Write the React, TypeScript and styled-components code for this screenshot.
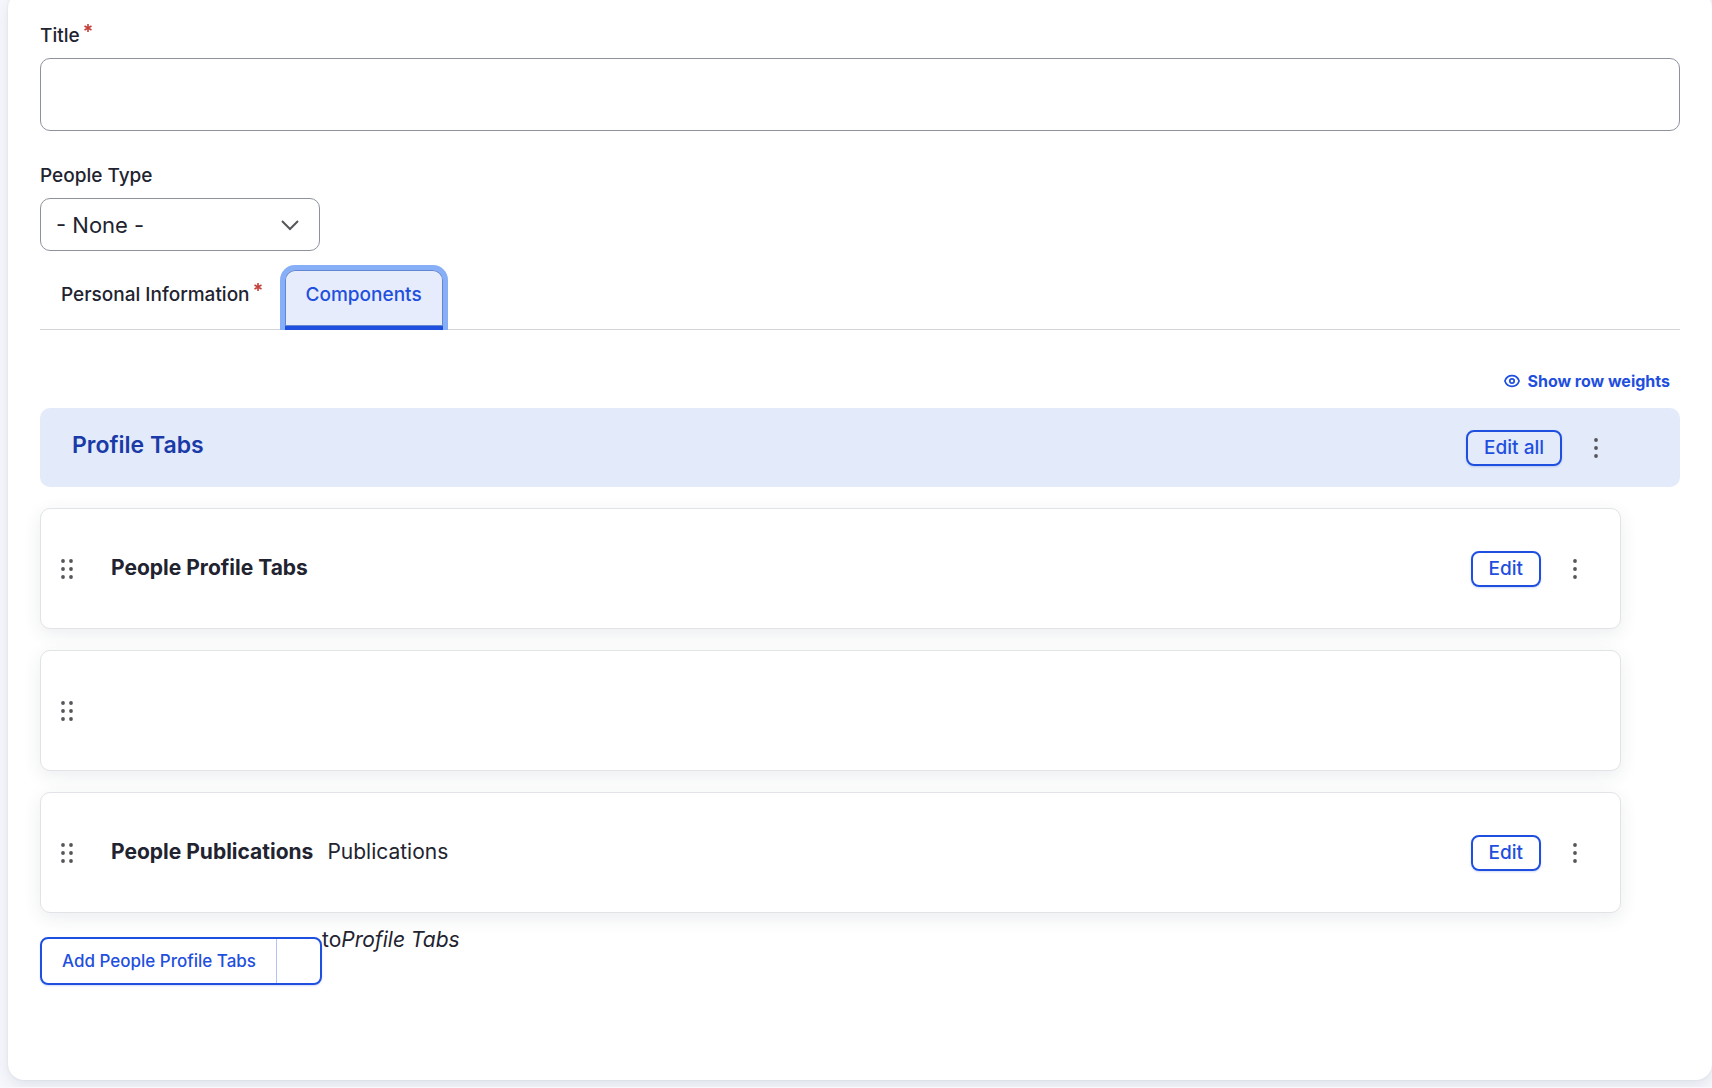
import React from "react";
import styled, { createGlobalStyle, css } from "styled-components";

const c = {
  page: "#f7f8fd",
  ink: "#222330",
  muted: "#55565b",
  line: "#d3d4d9",
  field: "#8e929c",
  blue: "#1f4fde",
  blueDark: "#1a3aa8",
  tint: "#e3eaf9",
  red: "#c5403a",
};

const GlobalStyle = createGlobalStyle`
  *, *::before, *::after { box-sizing: border-box; }
  body {
    margin: 0;
    background: ${c.page};
    color: ${c.ink};
    font-family: Inter, "Liberation Sans", sans-serif;
    font-size: 21px;
    line-height: 34px;
    -webkit-font-smoothing: antialiased;
  }
  button, input, select { font: inherit; color: inherit; }
`;

const Panel = styled.main`
  margin: -8px 0 7px 8px;
  padding: 32px 32px 95px;
  background: #fff;
  border-radius: 16px;
  box-shadow: 0 0 3px rgba(34, 35, 48, 0.08), 0 6px 16px rgba(34, 50, 80, 0.1);
`;

const Field = styled.div<{ $last?: boolean }>`
  display: flex;
  flex-direction: column;
  align-items: flex-start;
  gap: 10px;
  margin-bottom: ${(p) => (p.$last ? 19 : 33)}px;
`;

const Label = styled.label`
  display: flex;
  gap: 4px;
  font-size: 19px;
  line-height: 24px;
  font-weight: 500;
`;

const TextInput = styled.input`
  width: 100%;
  height: 73px;
  padding: 0 16px;
  border: 1px solid ${c.field};
  border-radius: 10px;
  background: #fff;
`;

const SelectWrap = styled.div`
  display: grid;
  width: 280px;
  align-items: center;
  > * { grid-area: 1 / 1; }
  > svg { justify-self: end; margin-right: 21px; pointer-events: none; }
`;

const Select = styled.select`
  appearance: none;
  width: 100%;
  height: 53px;
  padding: 0 48px 0 15px;
  border: 1px solid ${c.field};
  border-radius: 10px;
  background: #fff;
  font-size: 22px;
`;

const TabList = styled.nav`
  display: flex;
  gap: 2px;
  height: 60px;
  border-bottom: 1px solid ${c.line};
`;

const Tab = styled.a<{ $active?: boolean }>`
  display: flex;
  gap: 4px;
  height: 60px;
  padding: 13px 21px 12px;
  border-radius: 10px 10px 0 0;
  color: ${c.ink};
  font-size: 19px;
  line-height: 24px;
  font-weight: 500;
  text-decoration: none;
  ${(p) =>
    p.$active &&
    css`
      color: ${c.blue};
      background: #e6ecfb;
      border-bottom: 4px solid ${c.blue};
      box-shadow: inset 0 0 0 1px #6387d0, 0 0 0 5px #87aff8;
      clip-path: inset(-8px -8px 0 -8px);
    `}
`;

const WeightsRow = styled.div`
  display: flex;
  justify-content: flex-end;
  padding: 39px 10px 15px;
`;

const WeightsButton = styled.button`
  display: flex;
  align-items: center;
  gap: 7px;
  padding: 0;
  border: 0;
  background: none;
  color: ${c.blue};
  font-size: 16px;
  line-height: 24px;
  font-weight: 700;
`;

const GroupHeader = styled.header`
  display: flex;
  align-items: center;
  justify-content: space-between;
  height: 79px;
  padding: 0 72px 0 32px;
  border-radius: 10px;
  background: ${c.tint};
`;

const GroupTitle = styled.h2`
  margin: 0;
  padding-bottom: 6px;
  color: ${c.blueDark};
  font-size: 23px;
  line-height: 32px;
  font-weight: 600;
`;

const Rows = styled.ul`
  display: flex;
  flex-direction: column;
  gap: 21px;
  margin: 21px 59px 10px 0;
  padding: 0;
  list-style: none;
`;

const Row = styled.li`
  display: flex;
  align-items: center;
  height: 121px;
  padding: 0 33px 0 18px;
  border: 1px solid #e2e3e6;
  border-radius: 10px;
  background: #fff;
  box-shadow: 0 5px 18px rgba(34, 50, 80, 0.09);
`;

const IconButton = styled.button`
  display: flex;
  align-items: center;
  justify-content: center;
  width: 24px;
  height: 36px;
  padding: 0;
  border: 0;
  background: none;
  color: ${c.muted};
`;

const Handle = styled(IconButton)`
  width: 16px;
  margin-right: 36px;
`;

const RowText = styled.div`
  display: flex;
  flex: 1;
  gap: 14px;
  padding-bottom: 2px;
`;

const RowTitle = styled.strong`
  font-weight: 700;
`;

const Actions = styled.div`
  display: flex;
  align-items: center;
  gap: 22px;
`;

const OutlineButton = styled.button`
  height: 36px;
  padding: 0 16px;
  border: 2px solid ${c.blue};
  border-radius: 8px;
  background: transparent;
  box-shadow: 0 1px 2px rgba(31, 79, 222, 0.2);
  color: ${c.blue};
  font-size: 19px;
  line-height: 24px;
  font-weight: 500;
`;

const AddRow = styled.div`
  display: flex;
  align-items: flex-start;
`;

const SplitButton = styled.div`
  display: flex;
  height: 48px;
  margin-top: 14px;
  border: 2px solid ${c.blue};
  border-radius: 8px;
  box-shadow: 0 1px 2px rgba(31, 79, 222, 0.2);
`;

const SplitMain = styled.button`
  padding: 0 20px;
  border: 0;
  background: none;
  color: ${c.blue};
  font-size: 17px;
  line-height: 24px;
  font-weight: 500;
`;

const SplitToggle = styled.button`
  width: 44px;
  padding: 0;
  border: 0;
  border-left: 1px solid #b4c4f2;
  background: none;
`;

const RequiredMark = () => (
  <svg width="8" height="8" viewBox="0 0 8 8" stroke={c.red} strokeWidth="1.6" aria-hidden="true">
    <path d="M4 0v8M0.5 2l7 4M7.5 2l-7 4" />
  </svg>
);

const Chevron = () => (
  <svg width="18" height="12" viewBox="0 0 18 12" fill="none" stroke={c.muted} strokeWidth="2" aria-hidden="true">
    <path d="M1 2l8 8 8-8" />
  </svg>
);

const Eye = () => (
  <svg width="16" height="16" viewBox="0 0 16 16" fill="none" stroke="currentColor" aria-hidden="true">
    <path d="M.9 8C2 4.700 4.700 2.700 8 2.700S14 4.700 15.100 8C14 11.300 11.300 13.300 8 13.300S2 11.300.9 8z" strokeWidth="1.700" />
    <circle cx="8" cy="8" r="2.200" strokeWidth="1.700" />
  </svg>
);

const Dots = ({ columns }: { columns: number[] }) => (
  <svg width={columns.length > 1 ? 16 : 4} height="20" viewBox={columns.length > 1 ? "0 0 16 20" : "0 0 4 20"} fill="currentColor" aria-hidden="true">
    {columns.flatMap((x) => [2, 10, 18].map((y) => <circle key={`${x}-${y}`} cx={x} cy={y} r="1.900" />))}
  </svg>
);

const MoreButton = ({ name }: { name: string }) => (
  <IconButton type="button" aria-label={`More actions for ${name}`}>
    <Dots columns={[2]} />
  </IconButton>
);

const rows = [
  { id: "profile", title: "People Profile Tabs" },
  { id: "empty" },
  { id: "publications", title: "People Publications", summary: "Publications" },
];

export default function App() {
  return (
    <>
      <GlobalStyle />
      <Panel>
        <Field>
          <Label htmlFor="title">
            Title
            <RequiredMark />
          </Label>
          <TextInput id="title" type="text" required />
        </Field>
        <Field $last>
          <Label htmlFor="people-type">People Type</Label>
          <SelectWrap>
            <Select id="people-type" defaultValue="none">
              <option value="none">- None -</option>
            </Select>
            <Chevron />
          </SelectWrap>
        </Field>

        <TabList aria-label="Sections">
          <Tab href="#personal">
            Personal Information
            <RequiredMark />
          </Tab>
          <Tab href="#components" $active aria-current="true">
            Components
          </Tab>
        </TabList>

        <section id="components">
          <WeightsRow>
            <WeightsButton type="button">
              <Eye />
              Show row weights
            </WeightsButton>
          </WeightsRow>
          <GroupHeader>
            <GroupTitle>Profile Tabs</GroupTitle>
            <Actions>
              <OutlineButton type="button">Edit all</OutlineButton>
              <MoreButton name="Profile Tabs" />
            </Actions>
          </GroupHeader>
          <Rows>
            {rows.map((row) => (
              <Row key={row.id}>
                <Handle type="button" aria-label="Drag to re-order">
                  <Dots columns={[4, 12]} />
                </Handle>
                <RowText>
                  {row.title && <RowTitle>{row.title}</RowTitle>}
                  {row.summary && <span>{row.summary}</span>}
                </RowText>
                {row.title && (
                  <Actions>
                    <OutlineButton type="button">Edit</OutlineButton>
                    <MoreButton name={row.title} />
                  </Actions>
                )}
              </Row>
            ))}
          </Rows>
          <AddRow>
            <SplitButton>
              <SplitMain type="button">Add People Profile Tabs</SplitMain>
              <SplitToggle type="button" aria-label="List additional actions" />
            </SplitButton>
            <span>
              to<em>Profile Tabs</em>
            </span>
          </AddRow>
        </section>
      </Panel>
    </>
  );
}
